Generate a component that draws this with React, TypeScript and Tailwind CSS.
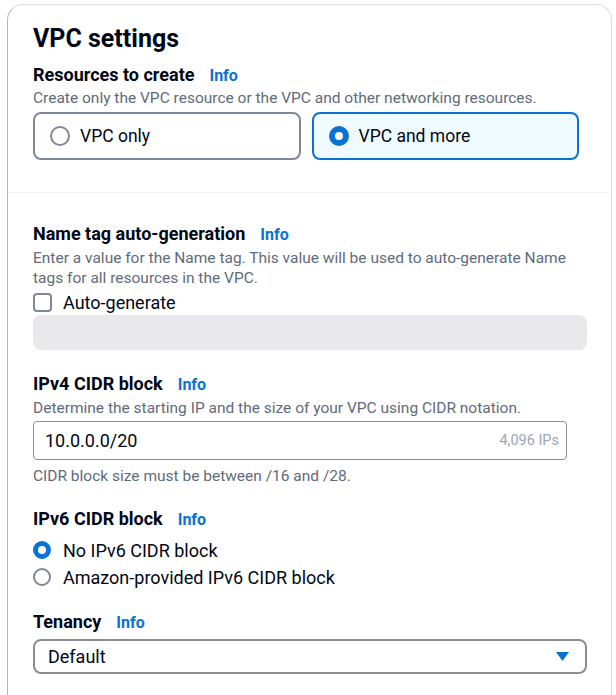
import React, { useState } from "react";

const font = { fontFamily: "Roboto, 'Noto Sans', sans-serif" };

const Info = () => (
  <a className="ml-[15px] text-[16px] font-bold text-[#0972d3]">Info</a>
);

const Label = ({ children }: { children: React.ReactNode }) => (
  <div className="flex items-baseline leading-[25px]">
    <span className="text-[18px] font-bold text-[#000716]">{children}</span>
    <Info />
  </div>
);

const Radio = ({ checked, size = 18, ring = 5 }: { checked: boolean; size?: number; ring?: number }) => (
  <span
    className={
      checked
        ? "box-border inline-block shrink-0 rounded-full border-[#0972d3] bg-white"
        : "box-border inline-block shrink-0 rounded-full border-2 border-[#7d8998] bg-white"
    }
    style={checked ? { width: size, height: size, borderWidth: ring } : { width: size, height: size }}
  />
);

const Tile = ({
  label,
  checked,
  onClick,
}: {
  label: string;
  checked: boolean;
  onClick: () => void;
}) => (
  <button
    onClick={onClick}
    className={
      checked
        ? "flex h-[48px] flex-1 items-center gap-[10px] rounded-[8px] border-2 border-[#0972d3] bg-[#f0fbff] pl-[15px] text-left"
        : "flex h-[48px] flex-1 items-center gap-[10px] rounded-[8px] border-2 border-[#7d8998] bg-white pl-[15px] text-left"
    }
  >
    <Radio checked={checked} size={20} ring={6} />
    <span className="text-[17.5px] text-[#000716]">{label}</span>
  </button>
);

export default function App() {
  const [resource, setResource] = useState("more");
  const [ipv6, setIpv6] = useState("none");
  const [auto, setAuto] = useState(false);

  return (
    <div className="min-h-[695px] bg-white pl-[7px] pr-[4px] pt-[4px]" style={font}>
      <div className="h-[700px] rounded-t-[16px] border border-b-0 border-[#dcdcdc] border-l-[#b6b6b6]">
        {/* header section */}
        <div className="px-[25px] pb-[32px] pt-[17px]">
          <h2 className="text-[25px] font-bold leading-[34px] text-[#000716]">VPC settings</h2>
          <div className="mt-[6px]">
            <Label>Resources to create</Label>
          </div>
          <p className="text-[15.5px] leading-[20px] text-[#5f6b7a]">
            Create only the VPC resource or the VPC and other networking resources.
          </p>
          <div className="mr-[7px] mt-[4px] flex gap-[11px]">
            <Tile label="VPC only" checked={resource === "only"} onClick={() => setResource("only")} />
            <Tile label="VPC and more" checked={resource === "more"} onClick={() => setResource("more")} />
          </div>
        </div>

        <div className="border-t border-[#f0f0f0] px-[25px] pt-[28px]">
          {/* name tag */}
          <Label>Name tag auto-generation</Label>
          <p className="mt-[1px] text-[15.5px] leading-[20px] text-[#5f6b7a]">
            Enter a value for the Name tag. This value will be used to auto-generate Name tags for
            all resources in the VPC.
          </p>
          <label className="mt-[3px] flex h-[22px] items-center gap-[11px]" onClick={() => setAuto(!auto)}>
            <span
              className={
                auto
                  ? "box-border inline-block h-[19px] w-[19px] rounded-[4px] border-2 border-[#0972d3] bg-[#0972d3]"
                  : "box-border inline-block h-[19px] w-[19px] rounded-[4px] border-2 border-[#7d8998] bg-white"
              }
            />
            <span className="text-[18px] text-[#000716]">Auto-generate</span>
          </label>
          <div className="mr-[-1px] mt-[2px] h-[35px] rounded-[8px] bg-[#e9e9ed]" />

          {/* ipv4 */}
          <div className="mt-[21px]">
            <Label>IPv4 CIDR block</Label>
          </div>
          <p className="mt-[1px] text-[15.5px] leading-[20px] text-[#5f6b7a]">
            Determine the starting IP and the size of your VPC using CIDR notation.
          </p>
          <div className="mr-[19px] mt-[3px] flex h-[39px] items-center justify-between rounded-[4px] border border-[#8c8c94] pl-[11px] pr-[7px]">
            <span className="text-[18px] text-[#000716]">10.0.0.0/20</span>
            <span className="text-[14.5px] text-[#9ba7b6]">4,096 IPs</span>
          </div>
          <p className="mt-[6px] text-[15.5px] leading-[20px] text-[#5f6b7a]">
            CIDR block size must be between /16 and /28.
          </p>

          {/* ipv6 */}
          <div className="mt-[20px]">
            <Label>IPv6 CIDR block</Label>
          </div>
          <div className="mt-[7px] flex flex-col gap-[5px]">
            <button className="flex h-[22px] items-center gap-[12px]" onClick={() => setIpv6("none")}>
              <Radio checked={ipv6 === "none"} size={18} ring={5} />
              <span className="text-[18px] text-[#000716]">No IPv6 CIDR block</span>
            </button>
            <button className="flex h-[22px] items-center gap-[12px]" onClick={() => setIpv6("amazon")}>
              <Radio checked={ipv6 === "amazon"} size={18} ring={5} />
              <span className="text-[18px] text-[#000716]">Amazon-provided IPv6 CIDR block</span>
            </button>
          </div>

          {/* tenancy */}
          <div className="mt-[21px]">
            <Label>Tenancy</Label>
          </div>
          <div className="mr-[-1px] mt-[4px] flex h-[35px] items-center justify-between rounded-[8px] border-2 border-[#8c8c94] pl-[13px] pr-[16px]">
            <span className="text-[18px] text-[#000716]">Default</span>
            <svg width="13" height="9" viewBox="0 0 13 9">
              <path d="M0 0 H13 L6.5 9 Z" fill="#0972d3" />
            </svg>
          </div>
        </div>
      </div>
    </div>
  );
}
